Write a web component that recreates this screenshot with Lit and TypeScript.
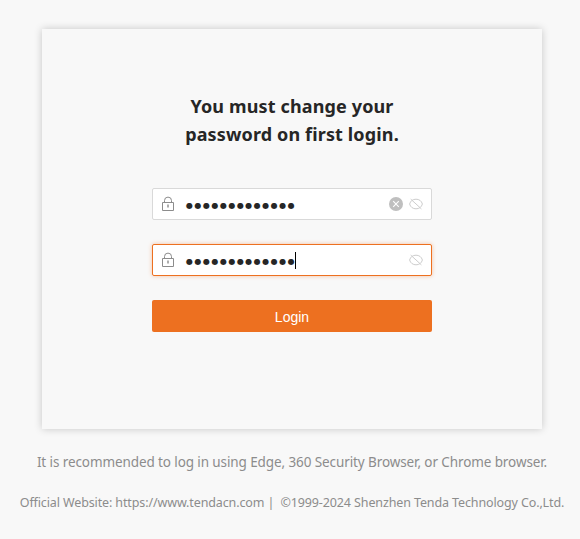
import { LitElement, html, css } from "lit";
import { customElement, property } from "lit/decorators.js";
import { classMap } from "lit/directives/class-map.js";

@customElement("password-field")
class PasswordField extends LitElement {
  @property({ type: Boolean }) active = false;
  @property({ type: Boolean }) clearable = false;

  static styles = css`
    :host { display: block; }
    .field {
      box-sizing: border-box;
      height: 32px;
      display: flex;
      align-items: center;
      padding: 0 8px;
      border: 1px solid #d9d9d9;
      border-radius: 2px;
      background: #fff;
    }
    .active {
      border-color: #ed7020;
      box-shadow: 0 0 4px rgba(237, 112, 32, 0.4);
    }
    svg { display: block; flex: none; }
    .dots {
      margin-left: 11px;
      width: 109px;
      font: 8px/16px "DejaVu Sans", sans-serif;
      letter-spacing: 1.5px;
      color: #262626;
      padding-top: 4px;
      white-space: nowrap;
    }
    .caret { width: 1px; height: 17px; background: #000; }
    .icons { margin-left: auto; display: flex; gap: 6px; align-items: center; }
  `;

  render() {
    return html`
      <div class=${classMap({ field: true, active: this.active })}>
        <svg width="14" height="16" viewBox="0 0 14 16" fill="none" stroke="#8c8c8c">
          <path d="M1.5 6.5h11v8h-11z" />
          <path d="M3.5 6.5V4.6a3.5 3.5 0 0 1 7 0V6.5" />
          <path d="M7 8.5v3" stroke-width="1.6" stroke="#999" />
        </svg>
        <span class="dots">${"●".repeat(13)}</span>
        ${this.active ? html`<span class="caret"></span>` : ""}
        <span class="icons">
          ${this.clearable
            ? html`<svg width="14" height="14" viewBox="0 0 14 14">
                <circle cx="7" cy="7" r="7" fill="#bfbfbf" />
                <path d="M4.2 4.2l5.6 5.6M9.8 4.2l-5.6 5.6" stroke="#fff" stroke-width="1.1" />
              </svg>`
            : ""}
          <svg width="14" height="12" viewBox="0 0 14 12" fill="none" stroke="#cdcdcd">
            <path d="M.6 6C1.4 2.9 3.9 1.2 7 1.2S12.6 2.9 13.4 6C12.6 9.1 10.1 10.8 7 10.8S1.4 9.1.6 6z" />
            <path d="M1.7 1.1l10.7 9.8" />
          </svg>
        </span>
      </div>
    `;
  }
}

@customElement("app-root")
class AppRoot extends LitElement {
  static styles = css`
    :host {
      display: block;
      box-sizing: border-box;
      height: 539px;
      padding: 29px 0 0 4px;
      overflow: hidden;
      background: #f8f8f8;
      font-family: "Noto Sans", "Open Sans", sans-serif;
    }
    .card {
      box-sizing: border-box;
      width: 500px;
      height: 400px;
      margin-left: 38px;
      padding: 63px 110px 0;
      background: #f8f8f8;
      box-shadow: 0 0 8px rgba(0, 0, 0, 0.2);
    }
    h1 {
      margin: 0 -20px 40px;
      font-size: 18px;
      line-height: 28px;
      font-weight: 700;
      letter-spacing: 0.14px;
      text-align: center;
      color: #262626;
    }
    h1 span { display: block; white-space: nowrap; }
    password-field { margin-bottom: 24px; }
    button {
      display: block;
      width: 100%;
      height: 32px;
      padding: 2px 0 0;
      border: 0;
      border-radius: 2px;
      background: #ed7020;
      color: #fff;
      font: 14px "Liberation Sans", sans-serif;
    }
    p {
      margin: 0;
      width: 576px;
      text-align: center;
      white-space: nowrap;
      color: #8c8c8c;
    }
    .advice { padding-top: 23px; font-size: 13.5px; line-height: 20px; letter-spacing: -0.1px; }
    .legal { padding-top: 21px; font-size: 12.5px; line-height: 20px; letter-spacing: -0.12px; }
  `;

  render() {
    return html`
      <main class="card">
        <h1><span>You must change your</span><span>password on first login.</span></h1>
        <password-field clearable></password-field>
        <password-field active></password-field>
        <button>Login</button>
      </main>
      <p class="advice">It is recommended to log in using Edge, 360 Security Browser, or Chrome browser.</p>
      <p class="legal">Official Website: https://www.tendacn.com |&nbsp; ©1999-2024 Shenzhen Tenda Technology Co.,Ltd.</p>
    `;
  }
}
